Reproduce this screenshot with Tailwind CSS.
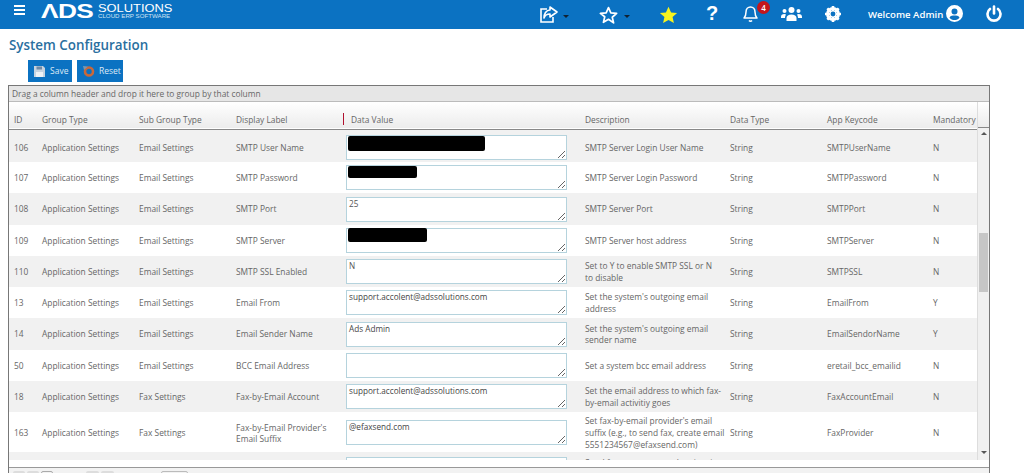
<!DOCTYPE html>
<html lang="en">
<head>
    <meta charset="UTF-8">
    <title>System Configuration</title>
    <script src="https://cdn.jsdelivr.net/npm/@tailwindcss/browser@4"></script>
</head>
<body class="bg-white h-[473px] overflow-hidden font-['Open_Sans',sans-serif] text-[#666]">
    <!-- top bar -->
    <header class="h-[29px] bg-[#0b72c2] flex items-center text-white">
        <svg class="w-[11px] h-[10px] ml-[14px] mb-[9px]" viewBox="0 0 11 10" fill="white"><rect width="11" height="2"/><rect y="4" width="11" height="2"/><rect y="8" width="11" height="2"/></svg>
        <div class="ml-[16px] self-start h-[21px] w-[150px] relative">
            <span class="block font-['Liberation_Sans',sans-serif] font-bold text-[21px] leading-[21px] scale-x-[1.25] origin-left tracking-[-0.5px]">ΛDS</span>
            <div class="absolute left-[57px] top-[3px] whitespace-nowrap">
                <div class="font-['Liberation_Sans',sans-serif] text-[11.5px] leading-[10px] text-white scale-x-[1.12] origin-left">SOLUTIONS</div>
                <div class="font-['Liberation_Sans',sans-serif] text-[5.5px] leading-[6px] text-[#cfe2f3] scale-x-[1.12] origin-left">CLOUD ERP SOFTWARE</div>
            </div>
        </div>
        <div class="ml-auto flex items-center h-[29px] relative w-[485px]">
            <!-- share -->
            <svg class="absolute left-0 top-[6px] w-[20px] h-[18px]" viewBox="0 0 20 18" fill="none" stroke="white" stroke-width="1.6"><path d="M8 3H2v13h12v-5"/><path d="M11 1l7 5-7 5V8C8 8 6 9 5 12 5 8 7 4 11 4z" stroke-linejoin="round"/></svg>
            <span class="absolute left-[24px] top-[15px] border-x-[3px] border-t-[3px] border-x-transparent border-t-[#123]"></span>
            <!-- star outline -->
            <svg class="absolute left-[60px] top-[6px] w-[19px] h-[18px]" viewBox="0 0 24 23" fill="none" stroke="white" stroke-width="2.2"><path d="M12 2l3 6.8 7.4.7-5.6 4.9 1.7 7.2L12 17l-6.5 3.900 1.700-7.200L1.600 9.500 9 8.800z" stroke-linejoin="round"/></svg>
            <span class="absolute left-[85px] top-[15px] border-x-[3px] border-t-[3px] border-x-transparent border-t-[#123]"></span>
            <!-- star solid -->
            <svg class="absolute left-[120px] top-[6px] w-[19px] h-[18px]" viewBox="0 0 24 23" fill="#f7f41f"><path d="M12 1l3.300 7.200 7.700.8-5.800 5.200 1.700 7.600L12 18l-6.900 3.800 1.700-7.600L1 9l7.700-.8z"/></svg>
            <!-- help -->
            <span class="absolute left-[167px] top-[-1px] font-['Liberation_Sans',sans-serif] font-bold text-[20px] leading-[29px]">?</span>
            <!-- bell -->
            <svg class="absolute left-[204px] top-[5px] w-[15px] h-[17px]" viewBox="0 0 15 17" fill="none" stroke="white" stroke-width="1.500"><path d="M1 13c2-2 2-4 2-6 0-3 2-5 4.500-5S12 4 12 7c0 2 0 4 2 6z" stroke-linejoin="round"/><path d="M6 15.500c.8 1 2.200 1 3 0"/></svg>
            <span class="absolute left-[218px] top-[1px] w-[13px] h-[13px] rounded-full bg-[#c4161c] text-white text-[8px] leading-[13px] text-center font-semibold">4</span>
            <!-- users -->
            <svg class="absolute left-[242px] top-[7px] w-[21px] h-[14px]" viewBox="0 0 21 14" fill="white"><circle cx="10.500" cy="3" r="3"/><circle cx="3.500" cy="4" r="2"/><circle cx="17.500" cy="4" r="2"/><path d="M5.500 14v-3c0-2 2-3.500 5-3.500s5 1.500 5 3.500v3z"/><path d="M0 10c0-2 1-3 3.500-3L5 7.500C4.500 8.500 4 9.500 4 11H0zM21 10c0-2-1-3-3.500-3L16 7.500c.5 1 1 2 1 3.500h4z"/></svg>
            <!-- cog -->
            <svg class="absolute left-[286px] top-[6px] w-[16px] h-[16px]" viewBox="0 0 16 16"><circle cx="8" cy="8" r="5.500" fill="none" stroke="white" stroke-width="3"/><path d="M8 0v16M0 8h16M2.300 2.300l11.400 11.400M13.700 2.300L2.300 13.700" stroke="white" stroke-width="2.600"/><circle cx="8" cy="8" r="2.400" fill="#0b72c2"/></svg>
            <span class="absolute left-[329px] top-0 leading-[29px] text-[9.6px] font-semibold whitespace-nowrap">Welcome Admin</span>
            <!-- user circle -->
            <svg class="absolute left-[407px] top-[5px] w-[17px] h-[17px]" viewBox="0 0 17 17" fill="white"><path fill-rule="evenodd" d="M8.500 0a8.500 8.500 0 100 17 8.500 8.500 0 000-17zm0 3.500a3 3 0 110 6 3 3 0 010-6zm0 11.500c-2 0-3.800-.9-5-2.300.6-1.300 2-2.200 3.500-2.200h3c1.500 0 2.900.9 3.500 2.200-1.200 1.400-3 2.300-5 2.300z"/></svg>
            <!-- power -->
            <svg class="absolute left-[447px] top-[5px] w-[16px] h-[17px]" viewBox="0 0 16 17" fill="none" stroke="white" stroke-width="2.600" stroke-linecap="round"><path d="M8 1.500v7"/><path d="M4 4a6.500 6.500 0 108 0"/></svg>
        </div>
    </header>

    <h1 class="ml-[9px] mt-[7px] text-[13.4px] leading-[18px] font-semibold text-[#2a6f9f]">System Configuration</h1>

    <div class="flex gap-[5px] ml-[28px] mt-[6px]">
        <button class="w-[44px] h-[22px] bg-[#0b72c2] text-[#dbe9f5] text-[8.5px] flex items-center pl-[6px] gap-[5px]">
            <svg class="w-[11px] h-[11px]" viewBox="0 0 11 11"><path d="M0 0h9l2 2v9H0z" fill="#c6d3e0"/><rect x="2.500" y="0.500" width="5.500" height="3" fill="#6e8aa6"/><rect x="2" y="6" width="7" height="5" fill="#eef2f6"/></svg>
            Save
        </button>
        <button class="w-[46px] h-[22px] bg-[#0b72c2] text-[#dbe9f5] text-[8.5px] flex items-center pl-[6px] gap-[4px]">
            <svg class="w-[12px] h-[12px]" viewBox="0 0 12 12" fill="none"><circle cx="6" cy="6.500" r="4" stroke="#c8683a" stroke-width="2.600"/><path d="M0 1l5 .5L1 5z" fill="#7a96ad"/></svg>
            Reset
        </button>
    </div>

    <!-- grid -->
    <section class="ml-[8px] mt-[3px] w-[982px] h-[420px] border border-[#777] relative">
        <div class="h-[16px] bg-[#e6e6e6] border-b border-[#bbb] pl-[3px] text-[8.4px] leading-[15px]">Drag a column header and drop it here to group by that column</div>
        <div class="h-[358px] overflow-hidden">
            <table class="table-fixed w-[968px] border-collapse text-[8.4px] leading-[11.5px]">
                <colgroup>
                    <col class="w-[28px]"><col class="w-[97px]"><col class="w-[97px]"><col class="w-[111px]"><col class="w-[238px]"><col class="w-[145px]"><col class="w-[97px]"><col class="w-[106px]"><col class="w-[49px]">
                </colgroup>
                <thead>
                    <tr class="h-[27px] bg-gradient-to-b from-white to-[#ececec] border-b border-[#888] text-left">
                        <th class="font-normal pl-[5px] pt-[8px]">ID</th>
                        <th class="font-normal pl-[5px] pt-[8px]">Group Type</th>
                        <th class="font-normal pl-[5px] pt-[8px]">Sub Group Type</th>
                        <th class="font-normal pl-[5px] pt-[8px]">Display Label</th>
                        <th class="font-normal pl-[9px] pt-[8px] relative"><span class="absolute left-[1px] top-[11px] w-[1px] h-[12px] bg-[#b0102e]"></span>Data Value</th>
                        <th class="font-normal pl-[5px] pt-[8px]">Description</th>
                        <th class="font-normal pl-[5px] pt-[8px]">Data Type</th>
                        <th class="font-normal pl-[5px] pt-[8px]">App Keycode</th>
                        <th class="font-normal pl-[5px] pt-[8px] whitespace-nowrap">Mandatory</th>
                    </tr>
                </thead>
                <tbody>
                    <tr class="h-[33px] bg-[#f1f1f1]">
                        <td class="pl-[5px] pt-[3px]">106</td><td class="pl-[5px] pt-[3px]">Application Settings</td><td class="pl-[5px] pt-[3px]">Email Settings</td><td class="pl-[5px] pt-[3px]">SMTP User Name</td>
                        <td class="pl-[4px] pt-[3px] relative"><textarea class="block w-[221px] h-[25px] bg-white border border-[#b5d3dd] px-[2px] text-[8.2px]"></textarea><span class="absolute left-[6px] top-[6px] w-[137px] h-[15px] bg-black rounded-[2px]"></span></td>
                        <td class="pl-[5px] pt-[3px]">SMTP Server Login User Name</td><td class="pl-[5px] pt-[3px]">String</td><td class="pl-[5px] pt-[3px]">SMTPUserName</td><td class="pl-[5px] pt-[3px]">N</td>
                    </tr>
                    <tr class="h-[31px]">
                        <td class="pl-[5px]">107</td><td class="pl-[5px]">Application Settings</td><td class="pl-[5px]">Email Settings</td><td class="pl-[5px]">SMTP Password</td>
                        <td class="pl-[4px] relative"><textarea class="block w-[221px] h-[25px] bg-white border border-[#b5d3dd] px-[2px] text-[8.2px]"></textarea><span class="absolute left-[6px] top-[4px] w-[69px] h-[12px] bg-black rounded-[2px]"></span></td>
                        <td class="pl-[5px]">SMTP Server Login Password</td><td class="pl-[5px]">String</td><td class="pl-[5px]">SMTPPassword</td><td class="pl-[5px]">N</td>
                    </tr>
                    <tr class="h-[32px] bg-[#f1f1f1]">
                        <td class="pl-[5px]">108</td><td class="pl-[5px]">Application Settings</td><td class="pl-[5px]">Email Settings</td><td class="pl-[5px]">SMTP Port</td>
                        <td class="pl-[4px]"><textarea class="block w-[221px] h-[25px] bg-white border border-[#b5d3dd] px-[2px] text-[8.2px] leading-[12px] text-[#555]">25</textarea></td>
                        <td class="pl-[5px]">SMTP Server Port</td><td class="pl-[5px]">String</td><td class="pl-[5px]">SMTPPort</td><td class="pl-[5px]">N</td>
                    </tr>
                    <tr class="h-[31px]">
                        <td class="pl-[5px]">109</td><td class="pl-[5px]">Application Settings</td><td class="pl-[5px]">Email Settings</td><td class="pl-[5px]">SMTP Server</td>
                        <td class="pl-[4px] relative"><textarea class="block w-[221px] h-[25px] bg-white border border-[#b5d3dd] px-[2px] text-[8.2px]"></textarea><span class="absolute left-[6px] top-[3px] w-[79px] h-[14px] bg-black rounded-[2px]"></span></td>
                        <td class="pl-[5px]">SMTP Server host address</td><td class="pl-[5px]">String</td><td class="pl-[5px]">SMTPServer</td><td class="pl-[5px]">N</td>
                    </tr>
                    <tr class="h-[31px] bg-[#f1f1f1]">
                        <td class="pl-[5px]">110</td><td class="pl-[5px]">Application Settings</td><td class="pl-[5px]">Email Settings</td><td class="pl-[5px]">SMTP SSL Enabled</td>
                        <td class="pl-[4px]"><textarea class="block w-[221px] h-[25px] bg-white border border-[#b5d3dd] px-[2px] text-[8.2px] leading-[12px] text-[#555]">N</textarea></td>
                        <td class="pl-[5px]">Set to Y to enable SMTP SSL or N<br>to disable</td><td class="pl-[5px]">String</td><td class="pl-[5px]">SMTPSSL</td><td class="pl-[5px]">N</td>
                    </tr>
                    <tr class="h-[31px]">
                        <td class="pl-[5px]">13</td><td class="pl-[5px]">Application Settings</td><td class="pl-[5px]">Email Settings</td><td class="pl-[5px]">Email From</td>
                        <td class="pl-[4px]"><textarea class="block w-[221px] h-[25px] bg-white border border-[#b5d3dd] px-[2px] text-[8.2px] leading-[12px] text-[#444]">support.accolent@adssolutions.com</textarea></td>
                        <td class="pl-[5px]">Set the system's outgoing email<br>address</td><td class="pl-[5px]">String</td><td class="pl-[5px]">EmailFrom</td><td class="pl-[5px]">Y</td>
                    </tr>
                    <tr class="h-[32px] bg-[#f1f1f1]">
                        <td class="pl-[5px]">14</td><td class="pl-[5px]">Application Settings</td><td class="pl-[5px]">Email Settings</td><td class="pl-[5px]">Email Sender Name</td>
                        <td class="pl-[4px]"><textarea class="block w-[221px] h-[25px] bg-white border border-[#b5d3dd] px-[2px] text-[8.2px] leading-[12px] text-[#444]">Ads Admin</textarea></td>
                        <td class="pl-[5px]">Set the system's outgoing email<br>sender name</td><td class="pl-[5px]">String</td><td class="pl-[5px]">EmailSendorName</td><td class="pl-[5px]">Y</td>
                    </tr>
                    <tr class="h-[31px]">
                        <td class="pl-[5px]">50</td><td class="pl-[5px]">Application Settings</td><td class="pl-[5px]">Email Settings</td><td class="pl-[5px]">BCC Email Address</td>
                        <td class="pl-[4px]"><textarea class="block w-[221px] h-[25px] bg-white border border-[#b5d3dd] px-[2px] text-[8.2px]"></textarea></td>
                        <td class="pl-[5px]">Set a system bcc email address</td><td class="pl-[5px]">String</td><td class="pl-[5px]">eretail_bcc_emailid</td><td class="pl-[5px]">N</td>
                    </tr>
                    <tr class="h-[31px] bg-[#f1f1f1]">
                        <td class="pl-[5px]">18</td><td class="pl-[5px]">Application Settings</td><td class="pl-[5px]">Fax Settings</td><td class="pl-[5px]">Fax-by-Email Account</td>
                        <td class="pl-[4px]"><textarea class="block w-[221px] h-[25px] bg-white border border-[#b5d3dd] px-[2px] text-[8.2px] leading-[12px] text-[#444]">support.accolent@adssolutions.com</textarea></td>
                        <td class="pl-[5px] whitespace-nowrap">Set the email address to which fax-<br>by-email activitiy goes</td><td class="pl-[5px]">String</td><td class="pl-[5px]">FaxAccountEmail</td><td class="pl-[5px]">N</td>
                    </tr>
                    <tr class="h-[40px]">
                        <td class="pl-[5px] pt-[2px]">163</td><td class="pl-[5px] pt-[2px]">Application Settings</td><td class="pl-[5px] pt-[2px]">Fax Settings</td><td class="pl-[5px] pt-[2px] whitespace-nowrap">Fax-by-Email Provider's<br>Email Suffix</td>
                        <td class="pl-[4px]"><textarea class="block w-[221px] h-[25px] bg-white border border-[#b5d3dd] px-[2px] text-[8.2px] leading-[12px] text-[#444]">@efaxsend.com</textarea></td>
                        <td class="pl-[5px] pt-[2px] leading-[12px] whitespace-nowrap">Set fax-by-email provider's email<br>suffix (e.g., to send fax, create email<br>5551234567@efaxsend.com)</td><td class="pl-[5px] pt-[2px]">String</td><td class="pl-[5px] pt-[2px]">FaxProvider</td><td class="pl-[5px] pt-[2px]">N</td>
                    </tr>
                    <tr class="h-[46px] bg-[#f1f1f1]">
                        <td></td><td></td><td></td><td></td>
                        <td class="pl-[4px] pt-[5px] align-top"><textarea class="block w-[221px] h-[25px] bg-white border border-[#b5d3dd]"></textarea></td>
                        <td class="pl-[5px] pt-[5px] align-top whitespace-nowrap">Send fax to customer when invoice</td><td></td><td></td><td></td>
                    </tr>
                </tbody>
            </table>
        </div>
        <!-- scrollbar, over the table's right edge -->
        <div class="absolute right-0 top-[16px] w-[12px] h-[358px] bg-[#f0f0f0] border-l border-[#ddd]">
            <div class="h-[26px] bg-gradient-to-b from-white to-[#ececec] border-b border-[#888]"></div>
            <span class="absolute left-[3px] top-[30px] border-x-[3px] border-b-[3px] border-x-transparent border-b-[#555]"></span>
            <div class="absolute left-[1px] top-[131px] w-[9px] h-[59px] bg-[#c6c6c6]"></div>
            <span class="absolute left-[3px] top-[349px] border-x-[3px] border-t-[3px] border-x-transparent border-t-[#555]"></span>
        </div>
        <!-- pager, cut off by the window -->
        <div class="absolute left-0 right-0 top-[381px] h-[30px] bg-[#f2f2f2] border-t border-[#999] pt-[3px] pl-[4px] flex gap-[2px]">
            <span class="w-[12px] h-[12px] bg-[#ddd] rounded-[2px]"></span>
            <span class="w-[12px] h-[12px] bg-[#ddd] rounded-[2px]"></span>
            <span class="w-[12px] h-[12px] border border-[#aaa] rounded-[2px]"></span>
            <span class="w-[13px] h-[12px] bg-[#ddd] rounded-[2px] ml-[31px]"></span>
            <span class="w-[13px] h-[12px] bg-[#ddd] rounded-[2px]"></span>
            <span class="w-[27px] h-[12px] border border-[#bbb] rounded-[2px] ml-[45px]"></span>
        </div>
    </section>
</body>
</html>
